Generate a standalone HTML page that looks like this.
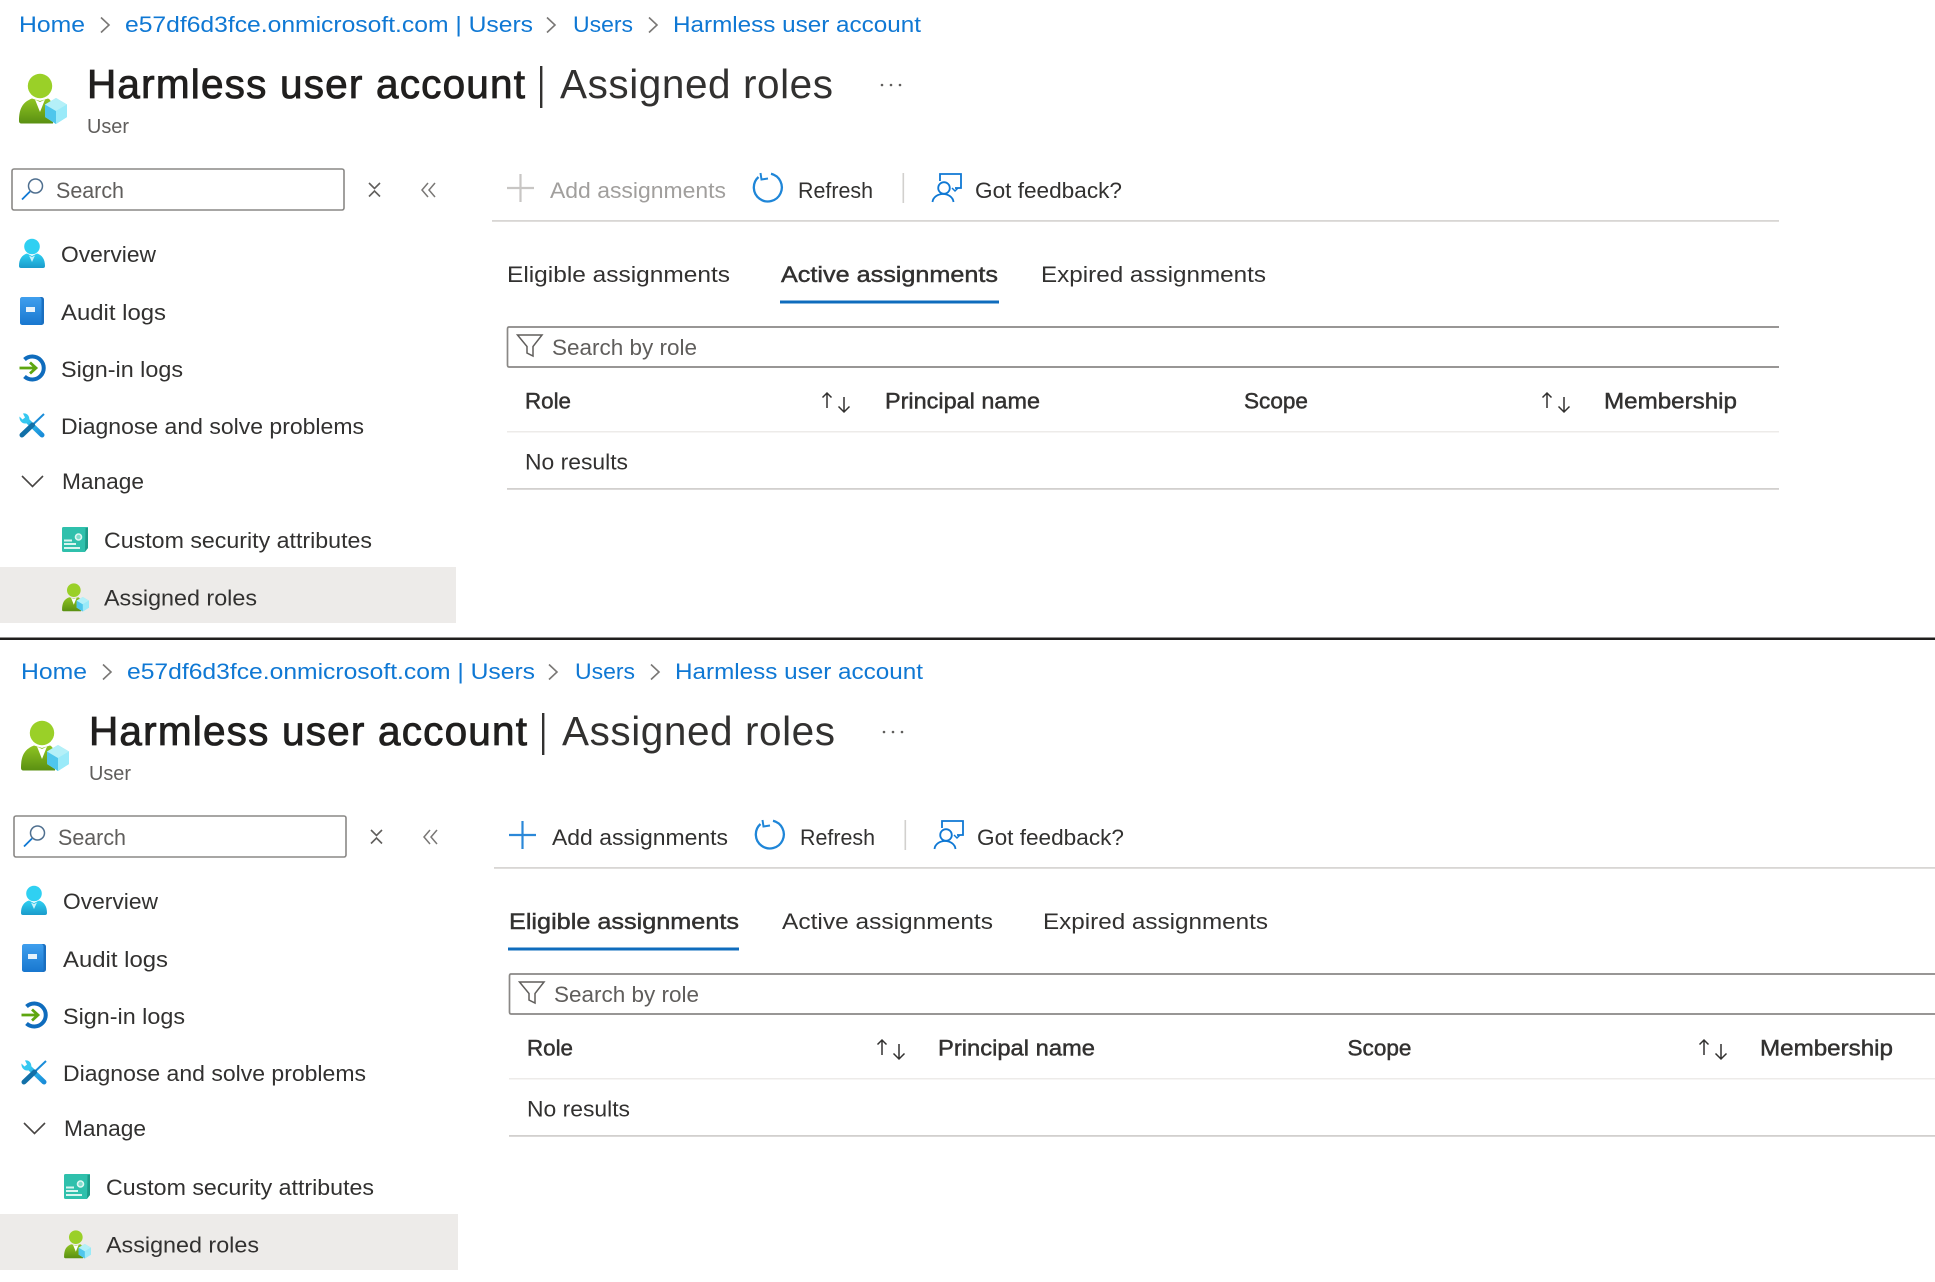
<!DOCTYPE html>
<html lang="en">
<head>
<meta charset="utf-8">
<title>Assigned roles</title>
<style>
html,body{margin:0;padding:0;background:#fff;width:1935px;height:1282px;overflow:hidden}
svg{display:block;filter:blur(.35px)}
text{font-family:"Liberation Sans",sans-serif;font-size:22.5px;fill:#323130}
.l{fill:#0f78d4}
.t{font-size:40.5px;fill:#323130}
.tb{font-size:40.5px;fill:#201f1e;stroke:#201f1e;stroke-width:.85px}
.s{stroke:#323130;stroke-width:.45px}
.g{fill:#605e5c}
.d{fill:#a19f9d}
.u{font-size:20.5px;fill:#605e5c}
</style>
</head>
<body>
<svg width="1935" height="1282" viewBox="0 0 1935 1282" xmlns="http://www.w3.org/2000/svg">
<defs>
<linearGradient id="gr" x1="0" y1="0" x2="0" y2="1"><stop offset="0" stop-color="#8fc422"/><stop offset="1" stop-color="#5a9012"/></linearGradient>
<linearGradient id="gb" x1="0" y1="0" x2="0" y2="1"><stop offset="0" stop-color="#2fd0f2"/><stop offset="1" stop-color="#1a9bcb"/></linearGradient>
<linearGradient id="bk" x1="0" y1="0" x2="0" y2="1"><stop offset="0" stop-color="#3f9fee"/><stop offset="1" stop-color="#1877cf"/></linearGradient>
<linearGradient id="wr" x1="0" y1="0" x2="1" y2="1"><stop offset="0" stop-color="#35c8f0"/><stop offset="1" stop-color="#1a8cd8"/></linearGradient>
<symbol id="user" viewBox="0 0 48 50" overflow="visible">
<circle cx="21" cy="12" r="12.200" fill="#9ad028"/>
<path d="M0 47C0 34 4 28 13 24.500L21 27L29 24.500C36 27 34 49 34 49.500H2.500C1 49.500 0 48.500 0 47Z" fill="url(#gr)"/>
<path d="M16 25.500L21 38L26 25.500L21 28Z" fill="#fff"/>
<path d="M37 24L48 30.500V43L37 50L26 43V30.500Z" fill="#7fe3f6"/>
<path d="M37 37L48 30.500V43L37 50Z" fill="#9aeaf9"/>
<path d="M37 37L26 30.500V43L37 50Z" fill="#4fc6ec"/>
<path d="M37 24L48 30.500L37 37L26 30.500Z" fill="#b4f0f8"/>
</symbol>
<symbol id="ov" viewBox="0 0 26 29" overflow="visible">
<circle cx="13" cy="7.500" r="7.800" fill="#2fd0f2"/>
<path d="M0 27C0 20 3 16 8 14.500L13 17L18 14.500C23 16 26 20 26 27Q26 29 24 29H2Q0 29 0 27Z" fill="url(#gb)"/>
<path d="M10 16.500L13 23L16 16.500L13 18Z" fill="#c8f2fb"/>
</symbol>
<symbol id="book" viewBox="0 0 24 28" overflow="visible">
<rect x="0" y="0" width="24" height="28" rx="2.500" fill="#1a6fc0"/>
<rect x="0" y="0" width="21.500" height="28" rx="2.500" fill="url(#bk)"/>
<rect x="6" y="10" width="9" height="5" fill="#e6f2fb"/>
</symbol>
<symbol id="sign" viewBox="0 0 26 28" overflow="visible">
<path d="M5.500 5.500A11.500 11.500 0 1 1 5.500 22.500" fill="none" stroke="#0f6cbd" stroke-width="4"/>
<path d="M0.500 14H16.500M11 8.500L17 14L11 19.500" fill="none" stroke="#5ea60f" stroke-width="2.800"/>
</symbol>
<symbol id="tool" viewBox="0 0 26 25" overflow="visible">
<path d="M8 7.500L23 22" stroke="url(#wr)" stroke-width="5" stroke-linecap="round" fill="none"/>
<path d="M25 1L14 11.500" stroke="#1a8cd8" stroke-width="2" fill="none"/>
<path d="M13.500 12L3 22" stroke="#1270a8" stroke-width="5" stroke-linecap="round" fill="none"/>
<path d="M0.500 3.500L3.500 6.500L6 4.500L4 0.500C8 -0.500 11.500 3.500 10 8L7 10.500C3 11 0 7.500 0.500 3.500Z" fill="#35c8f0"/>
</symbol>
<symbol id="attr" viewBox="0 0 26 25" overflow="visible">
<path d="M1.500 0H26V21L23 25H1.500Q0 25 0 23.500V1.500Q0 0 1.500 0Z" fill="#2fc0ac"/>
<path d="M23.500 1H26V21L23 24.500Z" fill="#1d9b88"/>
<rect x="2" y="12.500" width="8" height="2" fill="#d8f5ef"/>
<rect x="2" y="16" width="12" height="2" fill="#d8f5ef"/>
<rect x="2" y="20" width="16" height="2" fill="#d8f5ef"/>
<circle cx="16.500" cy="10" r="3" fill="#7fdccc" stroke="#e0f7f2" stroke-width="1.600"/>
</symbol>
<symbol id="sort" viewBox="0 0 31 21" overflow="visible">
<path d="M6 1V16M1.500 5.500L6 1L10.500 5.500" fill="none" stroke="#323130" stroke-width="1.500"/>
<path d="M23 5V20M17.500 14.500L23 20L28.500 14.500" fill="none" stroke="#323130" stroke-width="1.500"/>
</symbol>
</defs>

<!-- PANEL 1 -->
<g>
<text class="l" x="19" y="32" textLength="66" lengthAdjust="spacingAndGlyphs">Home</text>
<path d="M101 17.500L109 25L101 32.500" fill="none" stroke="#797775" stroke-width="1.600"/>
<text class="l" x="125" y="32" textLength="408" lengthAdjust="spacingAndGlyphs">e57df6d3fce.onmicrosoft.com | Users</text>
<path d="M547 17.500L555 25L547 32.500" fill="none" stroke="#797775" stroke-width="1.600"/>
<text class="l" x="573" y="32" textLength="60" lengthAdjust="spacingAndGlyphs">Users</text>
<path d="M649 17.500L657 25L649 32.500" fill="none" stroke="#797775" stroke-width="1.600"/>
<text class="l" x="673" y="32" textLength="248" lengthAdjust="spacingAndGlyphs">Harmless user account</text>
<use href="#user" x="19" y="74" width="48" height="50"/>
<text class="tb" x="87" y="98" textLength="438" lengthAdjust="spacing">Harmless user account</text>
<rect x="540" y="66" width="2.400" height="42" fill="#323130"/>
<text class="t" x="560" y="98" textLength="273" lengthAdjust="spacing">Assigned roles</text>
<circle cx="882" cy="85" r="1.300" fill="#605e5c"/><circle cx="891" cy="85" r="1.300" fill="#605e5c"/><circle cx="900" cy="85" r="1.300" fill="#605e5c"/>
<text class="u" x="87" y="133" textLength="42" lengthAdjust="spacingAndGlyphs">User</text>

<rect x="12" y="169" width="332" height="41" rx="2" fill="#fff" stroke="#8a8886" stroke-width="1.600"/>
<circle cx="35.500" cy="186" r="7" fill="none" stroke="#4f6f8f" stroke-width="1.500"/>
<path d="M30 191.500L22 199.500" stroke="#0f78d4" stroke-width="1.800"/>
<text class="g" x="56" y="198" textLength="68" lengthAdjust="spacingAndGlyphs">Search</text>
<path d="M369 183L374.500 188.500L380 183M369 196.500L374.500 191L380 196.500" fill="none" stroke="#605e5c" stroke-width="1.600"/>
<path d="M428 183L422 190L428 197M435 183L429 190L435 197" fill="none" stroke="#797775" stroke-width="1.500"/>

<use href="#ov" x="19" y="239" width="26" height="29"/>
<text x="61" y="262" textLength="95" lengthAdjust="spacingAndGlyphs">Overview</text>
<use href="#book" x="20" y="297" width="24" height="28"/>
<text x="61" y="320" textLength="105" lengthAdjust="spacingAndGlyphs">Audit logs</text>
<use href="#sign" x="19" y="354" width="26" height="28"/>
<text x="61" y="377" textLength="122" lengthAdjust="spacingAndGlyphs">Sign-in logs</text>
<use href="#tool" x="19" y="413" width="26" height="25"/>
<text x="61" y="434" textLength="303" lengthAdjust="spacingAndGlyphs">Diagnose and solve problems</text>
<path d="M22 476L32.500 486.500L43 476" fill="none" stroke="#484644" stroke-width="1.600"/>
<text x="62" y="489" textLength="82" lengthAdjust="spacingAndGlyphs">Manage</text>
<use href="#attr" x="62" y="527" width="26" height="25"/>
<text x="104" y="548" textLength="268" lengthAdjust="spacingAndGlyphs">Custom security attributes</text>
<rect x="0" y="567" width="456" height="56" fill="#edebe9"/>
<use href="#user" x="61.500" y="583.500" width="28" height="28"/>
<text x="104" y="605.500" textLength="153" lengthAdjust="spacingAndGlyphs">Assigned roles</text>

<!-- toolbar -->
<path d="M520.500 174V202M507 188H534" stroke="#c8c6c4" stroke-width="2.200"/>
<text class="d" x="550" y="198" textLength="176" lengthAdjust="spacingAndGlyphs">Add assignments</text>
<path d="M771 173.800A14 14 0 1 1 758.500 177" fill="none" stroke="#1f86d8" stroke-width="2.300"/>
<path d="M760.500 173L761.500 179.500L768 178.500" fill="none" stroke="#1f86d8" stroke-width="2"/>
<text x="798" y="198" textLength="75" lengthAdjust="spacingAndGlyphs">Refresh</text>
<rect x="902.500" y="173" width="1.600" height="30" fill="#d2d0ce"/>
<path d="M940 181V174H961V188H955" fill="none" stroke="#0f78d4" stroke-width="1.800"/>
<circle cx="944" cy="188" r="5.800" fill="none" stroke="#0f78d4" stroke-width="1.800"/>
<path d="M932.500 202C933 197 938 194 943 194C948 194 953 197 953.500 202" fill="none" stroke="#0f78d4" stroke-width="1.800"/>
<path d="M952 188L955 191L958 188" fill="none" stroke="#0f78d4" stroke-width="1.500"/>
<text x="975" y="198" textLength="147" lengthAdjust="spacingAndGlyphs">Got feedback?</text>
<rect x="492" y="220" width="1287" height="1.800" fill="#d8d6d4"/>

<!-- tabs -->
<text x="507" y="282" textLength="223" lengthAdjust="spacingAndGlyphs">Eligible assignments</text>
<text class="s" x="781" y="282" textLength="217" lengthAdjust="spacingAndGlyphs">Active assignments</text>
<text x="1041" y="282" textLength="225" lengthAdjust="spacingAndGlyphs">Expired assignments</text>
<rect x="780" y="300.500" width="219" height="3" fill="#0f6cbd"/>

<!-- filter -->
<path d="M1779 327H509Q507.500 327 507.500 329V365Q507.500 367 509 367H1779" fill="#fff" stroke="#8a8886" stroke-width="1.700"/>
<path d="M517.500 335H542L533 346.500V356L527 353V346.500Z" fill="none" stroke="#605e5c" stroke-width="1.500"/>
<text class="g" x="552" y="355" textLength="145" lengthAdjust="spacingAndGlyphs">Search by role</text>

<!-- table -->
<text class="s" x="525" y="408.500" textLength="46" lengthAdjust="spacingAndGlyphs">Role</text>
<use href="#sort" x="821" y="392" width="31" height="21"/>
<text class="s" x="885" y="408.500" textLength="155" lengthAdjust="spacingAndGlyphs">Principal name</text>
<text class="s" x="1244" y="408.500" textLength="64" lengthAdjust="spacingAndGlyphs">Scope</text>
<use href="#sort" x="1541" y="392" width="31" height="21"/>
<text class="s" x="1604" y="408.500" textLength="133" lengthAdjust="spacingAndGlyphs">Membership</text>
<rect x="507" y="431" width="1272" height="1.500" fill="#edebe9"/>
<text x="525" y="469.500" textLength="103" lengthAdjust="spacingAndGlyphs">No results</text>
<rect x="507" y="488" width="1272" height="1.800" fill="#d2d0ce"/>
</g>

<rect x="0" y="637.500" width="1935" height="2.500" fill="#201f1e"/>

<!-- PANEL 2 -->
<g transform="translate(2,647)">
<text class="l" x="19" y="32" textLength="66" lengthAdjust="spacingAndGlyphs">Home</text>
<path d="M101 17.500L109 25L101 32.500" fill="none" stroke="#797775" stroke-width="1.600"/>
<text class="l" x="125" y="32" textLength="408" lengthAdjust="spacingAndGlyphs">e57df6d3fce.onmicrosoft.com | Users</text>
<path d="M547 17.500L555 25L547 32.500" fill="none" stroke="#797775" stroke-width="1.600"/>
<text class="l" x="573" y="32" textLength="60" lengthAdjust="spacingAndGlyphs">Users</text>
<path d="M649 17.500L657 25L649 32.500" fill="none" stroke="#797775" stroke-width="1.600"/>
<text class="l" x="673" y="32" textLength="248" lengthAdjust="spacingAndGlyphs">Harmless user account</text>
<use href="#user" x="19" y="74" width="48" height="50"/>
<text class="tb" x="87" y="98" textLength="438" lengthAdjust="spacing">Harmless user account</text>
<rect x="540" y="66" width="2.400" height="42" fill="#323130"/>
<text class="t" x="560" y="98" textLength="273" lengthAdjust="spacing">Assigned roles</text>
<circle cx="882" cy="85" r="1.300" fill="#605e5c"/><circle cx="891" cy="85" r="1.300" fill="#605e5c"/><circle cx="900" cy="85" r="1.300" fill="#605e5c"/>
<text class="u" x="87" y="133" textLength="42" lengthAdjust="spacingAndGlyphs">User</text>

<rect x="12" y="169" width="332" height="41" rx="2" fill="#fff" stroke="#8a8886" stroke-width="1.600"/>
<circle cx="35.500" cy="186" r="7" fill="none" stroke="#4f6f8f" stroke-width="1.500"/>
<path d="M30 191.500L22 199.500" stroke="#0f78d4" stroke-width="1.800"/>
<text class="g" x="56" y="198" textLength="68" lengthAdjust="spacingAndGlyphs">Search</text>
<path d="M369 183L374.500 188.500L380 183M369 196.500L374.500 191L380 196.500" fill="none" stroke="#605e5c" stroke-width="1.600"/>
<path d="M428 183L422 190L428 197M435 183L429 190L435 197" fill="none" stroke="#797775" stroke-width="1.500"/>

<use href="#ov" x="19" y="239" width="26" height="29"/>
<text x="61" y="262" textLength="95" lengthAdjust="spacingAndGlyphs">Overview</text>
<use href="#book" x="20" y="297" width="24" height="28"/>
<text x="61" y="320" textLength="105" lengthAdjust="spacingAndGlyphs">Audit logs</text>
<use href="#sign" x="19" y="354" width="26" height="28"/>
<text x="61" y="377" textLength="122" lengthAdjust="spacingAndGlyphs">Sign-in logs</text>
<use href="#tool" x="19" y="413" width="26" height="25"/>
<text x="61" y="434" textLength="303" lengthAdjust="spacingAndGlyphs">Diagnose and solve problems</text>
<path d="M22 476L32.500 486.500L43 476" fill="none" stroke="#484644" stroke-width="1.600"/>
<text x="62" y="489" textLength="82" lengthAdjust="spacingAndGlyphs">Manage</text>
<use href="#attr" x="62" y="527" width="26" height="25"/>
<text x="104" y="548" textLength="268" lengthAdjust="spacingAndGlyphs">Custom security attributes</text>
<rect x="-2" y="567" width="458" height="56" fill="#edebe9"/>
<use href="#user" x="61.500" y="583.500" width="28" height="28"/>
<text x="104" y="605.500" textLength="153" lengthAdjust="spacingAndGlyphs">Assigned roles</text>

<!-- toolbar -->
<path d="M520.500 174V202M507 188H534" stroke="#2b88d8" stroke-width="2.200"/>
<text x="550" y="198" textLength="176" lengthAdjust="spacingAndGlyphs">Add assignments</text>
<path d="M771 173.800A14 14 0 1 1 758.500 177" fill="none" stroke="#1f86d8" stroke-width="2.300"/>
<path d="M760.500 173L761.500 179.500L768 178.500" fill="none" stroke="#1f86d8" stroke-width="2"/>
<text x="798" y="198" textLength="75" lengthAdjust="spacingAndGlyphs">Refresh</text>
<rect x="902.500" y="173" width="1.600" height="30" fill="#d2d0ce"/>
<path d="M940 181V174H961V188H955" fill="none" stroke="#0f78d4" stroke-width="1.800"/>
<circle cx="944" cy="188" r="5.800" fill="none" stroke="#0f78d4" stroke-width="1.800"/>
<path d="M932.500 202C933 197 938 194 943 194C948 194 953 197 953.500 202" fill="none" stroke="#0f78d4" stroke-width="1.800"/>
<path d="M952 188L955 191L958 188" fill="none" stroke="#0f78d4" stroke-width="1.500"/>
<text x="975" y="198" textLength="147" lengthAdjust="spacingAndGlyphs">Got feedback?</text>
<rect x="492" y="220" width="1441" height="1.800" fill="#d8d6d4"/>

<!-- tabs -->
<text class="s" x="507" y="282" textLength="230" lengthAdjust="spacingAndGlyphs">Eligible assignments</text>
<text x="780" y="282" textLength="211" lengthAdjust="spacingAndGlyphs">Active assignments</text>
<text x="1041" y="282" textLength="225" lengthAdjust="spacingAndGlyphs">Expired assignments</text>
<rect x="506" y="300.500" width="231" height="3" fill="#0f6cbd"/>

<!-- filter -->
<path d="M1935 327H509Q507.500 327 507.500 329V365Q507.500 367 509 367H1935" fill="#fff" stroke="#8a8886" stroke-width="1.700"/>
<path d="M517.500 335H542L533 346.500V356L527 353V346.500Z" fill="none" stroke="#605e5c" stroke-width="1.500"/>
<text class="g" x="552" y="355" textLength="145" lengthAdjust="spacingAndGlyphs">Search by role</text>

<!-- table -->
<text class="s" x="525" y="408.500" textLength="46" lengthAdjust="spacingAndGlyphs">Role</text>
<use href="#sort" x="874" y="392" width="31" height="21"/>
<text class="s" x="936" y="408.500" textLength="157" lengthAdjust="spacingAndGlyphs">Principal name</text>
<text class="s" x="1345.500" y="408.500" textLength="64" lengthAdjust="spacingAndGlyphs">Scope</text>
<use href="#sort" x="1696" y="392" width="31" height="21"/>
<text class="s" x="1758" y="408.500" textLength="133" lengthAdjust="spacingAndGlyphs">Membership</text>
<rect x="507" y="431" width="1426" height="1.500" fill="#edebe9"/>
<text x="525" y="469.500" textLength="103" lengthAdjust="spacingAndGlyphs">No results</text>
<rect x="507" y="488" width="1426" height="1.800" fill="#d2d0ce"/>
</g>
</svg>
</body>
</html>
